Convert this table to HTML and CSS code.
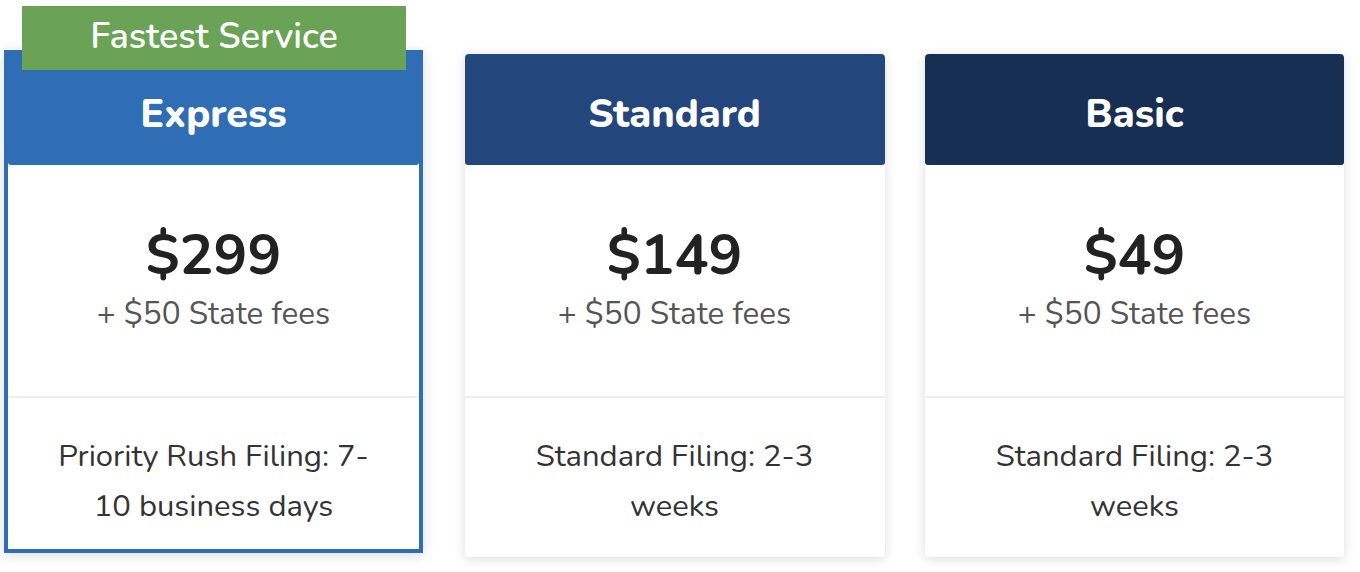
FILE: index.html
```html
<!DOCTYPE html>
<html lang="en">
<head>
<meta charset="utf-8">
<title>Pricing</title>
<link rel="stylesheet" href="styles.css">
</head>
<body>
<div class="plans">
  <div class="card card-express">
    <div class="badge">Fastest Service</div>
    <div class="card-head head-express">Express</div>
    <div class="card-price">
      <div class="price">$299</div>
      <div class="fees">+ $50 State fees</div>
    </div>
    <div class="card-feature"><p class="feature-text">Priority Rush Filing: 7-10 business days</p></div>
  </div>
  <div class="card">
    <div class="card-head head-standard">Standard</div>
    <div class="card-price">
      <div class="price">$149</div>
      <div class="fees">+ $50 State fees</div>
    </div>
    <div class="card-feature"><p class="feature-text">Standard Filing: 2-3 weeks</p></div>
  </div>
  <div class="card">
    <div class="card-head head-basic">Basic</div>
    <div class="card-price">
      <div class="price">$49</div>
      <div class="fees">+ $50 State fees</div>
    </div>
    <div class="card-feature"><p class="feature-text">Standard Filing: 2-3 weeks</p></div>
  </div>
</div>
</body>
</html>
```

FILE: styles.css
```css
* { box-sizing: border-box; }
html, body { margin: 0; padding: 0; background: #fff; }
body {
  font-family: "Nunito", "Lato", "Open Sans", sans-serif;
  color: #333;
  width: 1360px;
  height: 572px;
  overflow: hidden;
}
.plans {
  display: grid;
  grid-template-columns: 420px 420px 419px;
  column-gap: 40.5px;
  padding: 54px 0 0 4px;
  align-items: start;
}
.card {
  position: relative;
  height: 503px;
  background: #fff;
  border-radius: 4px;
  box-shadow: 0 2px 12px rgba(0, 0, 0, 0.14);
  display: flex;
  flex-direction: column;
}
.card-express {
  margin-top: -4px;
  border: 4px solid #2f6db5;
  border-radius: 0;
  width: 419px;
}
.badge {
  position: absolute;
  top: -48px;
  left: 14px;
  width: 384px;
  height: 64px;
  background: #6aa355;
  color: #fff;
  font-size: 36px;
  font-weight: 600;
  display: flex;
  align-items: center;
  justify-content: center;
  padding-bottom: 3px;
  z-index: 2;
}
.card-head {
  height: 111px;
  flex: none;
  display: flex;
  align-items: center;
  justify-content: center;
  color: #fff;
  font-size: 39.5px;
  font-weight: 800;
  border-radius: 4px 4px 3px 3px;
  padding-top: 8px;
}
.head-express {
  background: #2f6db5;
  border-radius: 0 0 3px 3px;
}
.head-standard { background: #23477d; }
.head-basic { background: #172f52; }
.card-price {
  height: 233px;
  flex: none;
  border-bottom: 2px solid #eeeeee;
  display: flex;
  flex-direction: column;
  align-items: center;
  padding-top: 59px;
}
.price {
  font-size: 56.5px;
  font-weight: 700;
  color: #222;
  line-height: 64px;
}
.fees {
  font-size: 31.5px;
  color: #555;
  line-height: 40px;
  margin-top: 6px;
}
.card-feature {
  flex: 1;
  display: flex;
  justify-content: center;
  padding-top: 33px;
}
.feature-text {
  margin: 0;
  max-width: 330px;
  text-align: center;
  font-size: 31px;
  line-height: 50px;
  color: #333;
}
```
